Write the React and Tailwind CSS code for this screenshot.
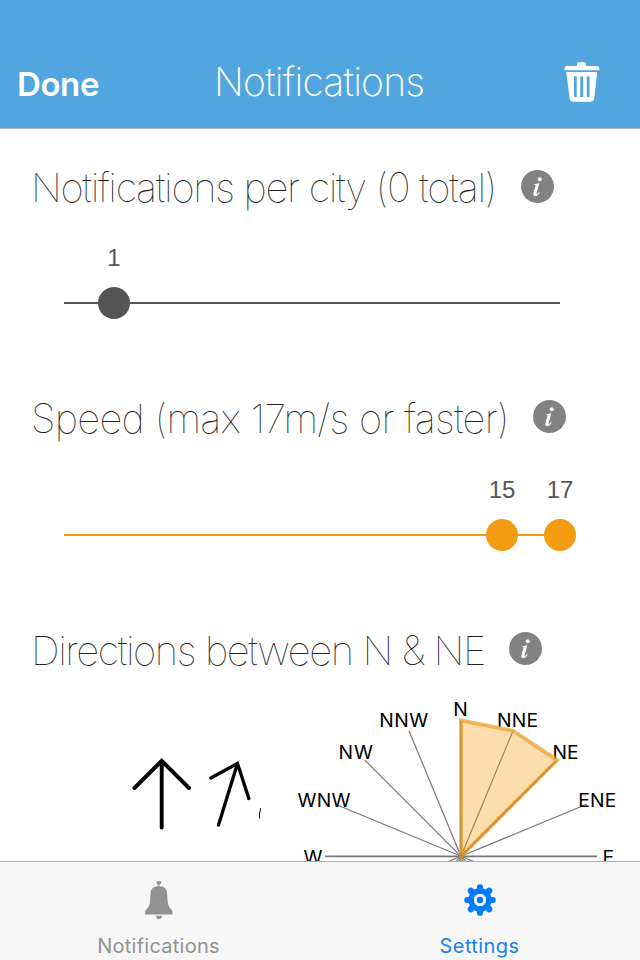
import React from 'react';

function TrashIcon() {
  return (
    <svg width="36" height="40" viewBox="0 0 36 40" fill="none">
      <path d="M13 4V2Q13 0.3 14.7 0.3H20.3Q22 0.3 22 2V4H32Q35.3 4 35.3 6.3V8.3H0.5V6.3Q0.5 4 4 4Z" fill="white" />
      <path fillRule="evenodd" d="M2.3 10H33.3L30.2 36.2Q29.8 39.7 26.5 39.7H9.3Q6 39.7 5.6 36.2ZM10 14.3V35H12.7V14.3ZM16.3 14.3V35H19.2V14.3ZM22.8 14.3V35H25.6V14.3Z" fill="white" />
    </svg>
  );
}

function InfoIcon() {
  return (
    <svg width="33" height="33" viewBox="0 0 33 33" className="mb-[2px] shrink-0">
      <circle cx="16.5" cy="16.5" r="16.5" fill="#828282" />
      <circle cx="18.8" cy="9.2" r="2" fill="white" />
      <path d="M13 14.4L18.4 12.9L15.6 23Q15.3 24.2 16 24Q17 23.5 18 21.9L18.7 22.4Q16.7 26 14 26Q11.7 26 12.4 23.3L14.6 15.6Q14.8 14.8 13 15.1Z" fill="white" />
    </svg>
  );
}

function Heading({ children, className }) {
  return (
    <div className="flex h-[58px] items-center pl-[31px]">
      <h2 className={`whitespace-nowrap font-thin text-[40px] leading-[58px] text-[#222] ${className}`}>{children}</h2>
      <InfoIcon />
    </div>
  );
}

function Slider({ color, knobs }) {
  return (
    <div className="relative mx-8 h-20 font-['Liberation_Sans',sans-serif] text-[24px] leading-6 text-[#555]">
      <div className={`absolute left-8 top-[56px] h-[2px] w-[496px] ${color}`} />
      {knobs.map((k) => (
        <div key={k.label} className="absolute top-0 flex w-8 flex-col items-center" style={{ left: k.x }}>
          <span>{k.label}</span>
          <span className={`mt-[17px] size-8 shrink-0 rounded-full ${color}`} />
        </div>
      ))}
    </div>
  );
}

const labels = [
  ['N', 453.3, 13, 716], ['NNE', 497, 41, 727], ['NE', 552.5, 26, 759], ['ENE', 578.3, 38, 807],
  ['E', 602.5, 10, 863.5], ['W', 303.5, 18, 863.5], ['WNW', 297.5, 53, 807], ['NW', 338.5, 34.5, 759], ['NNW', 379.2, 49, 727],
];

function WindRose() {
  const spokes = Array.from({ length: 16 }, (_, i) => {
    const a = (i * Math.PI) / 8;
    return [461 + 136 * Math.sin(a), 856.3 - 136 * Math.cos(a)];
  });
  return (
    <svg width="380" height="171" viewBox="260 690 380 171" className="shrink-0">
      {spokes.map(([x, y], i) => (
        <line key={i} x1="461" y1="856.3" x2={x} y2={y} stroke="#777" strokeWidth={i % 8 === 4 ? 1.7 : 1.2} />
      ))}
      <g fontFamily="Inter, sans-serif" fontSize="19.3" fill="black">
        {labels.map(([t, x, w, y]) => (
          <text key={t} x={x} y={y} textLength={w} lengthAdjust="spacing">{t}</text>
        ))}
      </g>
      <path d="M461 856.3V720.3L513 730.7L557.2 760.1Z" fill="#f39c12" fillOpacity="0.34" />
      <path d="M461 860V720.3L513 730.7L557.2 760.1L461 856.3" fill="none" stroke="#eca02b" strokeOpacity="0.75" strokeWidth="3.8" />
      <path d="M461 860V721M461 856.3L556 761.3" stroke="#a86d18" strokeOpacity="0.4" strokeWidth="1.2" />
    </svg>
  );
}

function Arrows() {
  return (
    <svg width="260" height="171" viewBox="0 690 260 171" className="shrink-0 overflow-visible" fill="none" stroke="black" strokeLinecap="round">
      <path strokeWidth="3.9" d="M161.7 827.5V761M134.5 788L161.7 760.8L189 788" />
      <path strokeWidth="3.3" d="M218.5 825L237.5 763.5M210.8 778L237.5 763.5L248.8 798.5" />
      <path strokeWidth="1" d="M260.5 808.5Q260.3 812 259.6 813Q259.2 816 259.6 818" />
    </svg>
  );
}

function Bell() {
  return (
    <svg width="30" height="40" viewBox="0 0 30 40" fill="#929292">
      <path d="M12.2 1.2H17.5Q17.2 4.2 15.5 4.7V6.2C20.5 6.5 23 8.6 23.2 13.5C23.5 23 24 26.5 27.3 29.3Q29 31 28.7 34.5H1Q.7 31 2.4 29.3C5.7 26.5 6.2 23 6.5 13.5C6.7 8.6 9.2 6.5 14.2 6.2V4.7Q12.5 4.2 12.2 1.2ZM12 35.8H18Q18 39 15 39Q12 39 12 35.8Z" />
    </svg>
  );
}

function Gear() {
  return (
    <svg width="32" height="32" viewBox="-16 -16 32 32">
      <g stroke="#007aff" strokeWidth="6.2" strokeLinecap="round">
        <path d="M0-12.7V-9M0 12.7V9M-12.7 0H-9M12.7 0H9M-9.2-9.2L-7-7M9.2 9.2L7 7M9.2-9.2L7-7M-9.2 9.2L-7 7" />
      </g>
      <circle r="9" fill="none" stroke="#007aff" strokeWidth="5.4" />
      <circle r="3.2" fill="#007aff" />
    </svg>
  );
}

export default function App() {
  return (
    <div className="flex h-[960px] w-[640px] flex-col overflow-hidden bg-white font-['Inter',sans-serif]">
      <header className="flex h-[129px] shrink-0 items-end border-b border-[#9db3c4] bg-[#52a6e0] pl-[17px] text-white">
        <div className="w-[197px] text-[33px] font-semibold leading-[88px] tracking-[-0.4px]">Done</div>
        <h1 className="w-[350px] whitespace-nowrap text-[39px] font-extralight leading-[92px] tracking-[-0.8px]">Notifications</h1>
        <div className="pb-[26px]"><TrashIcon /></div>
      </header>
      <main className="flex h-[732px] shrink-0 flex-col overflow-hidden">
        <section className="h-[230px] pt-[29px]">
          <Heading className="w-[490px] pt-px tracking-[-1.33px]">Notifications per city (0 total)</Heading>
          <div className="pt-[30px]"><Slider color="bg-[#555]" knobs={[{ label: '1', x: 66 }]} /></div>
        </section>
        <section className="h-[232px] pt-[29px]">
          <Heading className="w-[502px] pt-1 tracking-[-0.74px]">Speed (max 17m/s or faster)</Heading>
          <div className="pt-8"><Slider color="bg-[#f39c12]" knobs={[{ label: '15', x: 454 }, { label: '17', x: 512 }]} /></div>
        </section>
        <section className="pt-[29px]">
          <Heading className="w-[478px] pt-1 tracking-[-1.42px]">Directions between N &amp; NE</Heading>
          <div className="mt-3 flex"><Arrows /><WindRose /></div>
        </section>
      </main>
      <nav className="flex h-[99px] shrink-0 border-t border-[#adadad] bg-[#f7f7f7] text-[20px] leading-6 tracking-[0.25px]">
        <div className="flex w-[318px] flex-col items-center pt-[18px] text-[#929292]">
          <Bell /><span className="mt-[14px]">Notifications</span>
        </div>
        <div className="flex w-[324px] flex-col items-center pl-[2px] pt-[22px] text-[#1683ef]">
          <Gear /><span className="mt-[18px] tracking-[0.4px]">Settings</span>
        </div>
      </nav>
    </div>
  );
}
